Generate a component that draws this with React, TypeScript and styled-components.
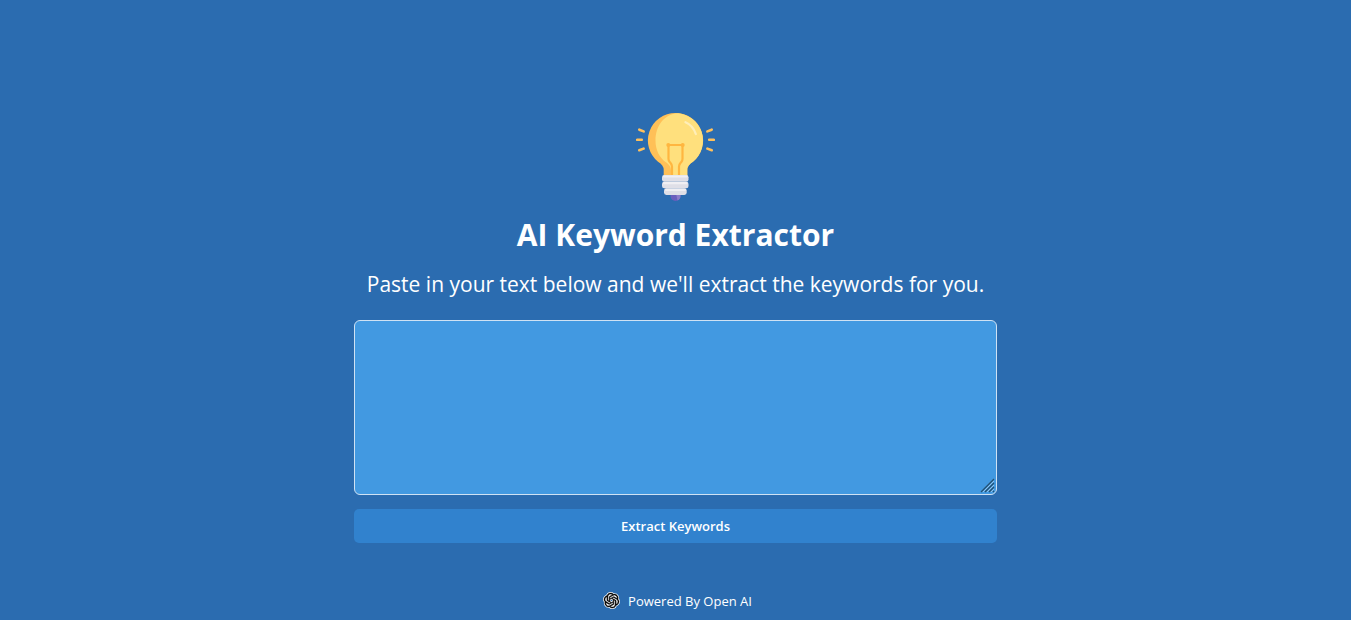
import React from "react";
import styled, { createGlobalStyle } from "styled-components";
import { SiOpenai } from "react-icons/si";

const GlobalStyle = createGlobalStyle`
  *, *::before, *::after { box-sizing: border-box; }
  body {
    margin: 0;
    background: #fff;
    color: #fff;
    font-family: "Segoe UI", "Open Sans", "Noto Sans", sans-serif;
  }
`;

const Frame = styled.div`
  display: flex;
  min-height: 100vh;
  padding: 0 14px 7px 0;
`;

const Page = styled.div`
  display: flex;
  flex: 1;
  flex-direction: column;
  align-items: center;
  padding: 113px 16px 8px;
  background: #2b6cb0;
`;

const Content = styled.main`
  display: flex;
  flex-direction: column;
  align-items: center;
  width: 100%;
  max-width: 643px;
`;

const Bulb = styled.svg`
  display: block;
  width: 79px;
  height: 88px;
`;

const Title = styled.h1`
  margin: 12px 0 0;
  font-size: 30px;
  font-weight: 700;
  line-height: 44px;
  text-align: center;
`;

const Intro = styled.p`
  margin: 11px 0 0;
  font-size: 21px;
  line-height: 32px;
  text-align: center;
`;

const Form = styled.form`
  display: flex;
  flex-direction: column;
  gap: 14px;
  width: 100%;
  margin-top: 20px;
`;

const Field = styled.div`
  position: relative;
  display: flex;
`;

const TextArea = styled.textarea`
  width: 100%;
  height: 175px;
  padding: 8px 16px;
  border: 1px solid #cfe2f4;
  border-radius: 6px;
  background: #4299e1;
  color: #fff;
  font: inherit;
  font-size: 14px;
  resize: none;
`;

const Grip = styled.svg`
  position: absolute;
  right: 2px;
  bottom: 2px;
  width: 15px;
  height: 15px;
  pointer-events: none;
`;

const SubmitButton = styled.button`
  height: 34px;
  border: 0;
  border-radius: 5px;
  background: #3182ce;
  color: #fff;
  font-family: inherit;
  font-size: 13px;
  font-weight: 600;
  cursor: pointer;
`;

const Footer = styled.footer`
  display: flex;
  align-items: center;
  gap: 8px;
  margin-top: 48px;
  padding-left: 4px;
  font-size: 13px;
  line-height: 20px;
`;

const Logo = styled.svg`
  width: 17px;
  height: 17px;
  margin-bottom: 2px;
`;

function BulbIcon() {
  return (
    <Bulb viewBox="11 8 79 88" aria-hidden="true">
      <circle cx="50.5" cy="91" r="5" fill="#6a5ebd" />
      <path d="M50.5 86h5v5a5 5 0 0 1-3 4.500z" fill="#8c7bc9" />
      <path
        d="M50.500 8A27.500 27.500 0 0 0 33 56.800q5.700 3.500 5.700 8V71h23.600v-6.200q0-4.500 5.700-8A27.500 27.500 0 0 0 50.500 8Z"
        fill="#ffc057"
      />
      <path
        d="M53 8.200C39 9 30.500 21 30.500 35.500c0 9.500 4 17 10 21.500 4.500 3 5.500 5.500 5.500 9v5h16.300v-6.200q0-4.500 5.700-8A27.500 27.500 0 0 0 53 8.200Z"
        fill="#ffe07d"
      />
      <path
        d="M47 71V61.500q0-2-1.800-4l-.7-.8q-1-1.200-1-3V39.500m10.500 31.500V61.500q0-2 1.800-4l.7-.8q1-1.200 1-3V39.500M43 40h15"
        fill="none"
        stroke="#ffb640"
        strokeWidth="2.200"
      />
      <circle cx="43.300" cy="40" r="2" fill="#ffb640" />
      <circle cx="57.700" cy="40" r="2" fill="#ffb640" />
      <path
        d="M60.500 17.300Q68 20.500 70.800 29"
        fill="none"
        stroke="#ffeeb8"
        strokeWidth="2.300"
        strokeLinecap="round"
      />
      <rect x="37" y="70" width="26.500" height="6.700" rx="2.300" fill="#dfdfe7" />
      <rect x="37" y="76.700" width="26.500" height="6.600" rx="2.300" fill="#dfdfe7" />
      <rect x="39" y="83.300" width="22.700" height="6.600" rx="2.300" fill="#dfdfe7" />
      <path
        d="M39 71.500h22.500M39 78.200h22.500M41 84.800h19"
        stroke="#f0eff3"
        strokeWidth="2.200"
        strokeLinecap="round"
      />
      <path
        d="m14.300 24.700 4.300 1.700M12.200 34.800h4.600M14.300 45.200l4.300-1.600M86.700 24.700l-4.300 1.700M88.800 34.800h-4.600M86.700 45.200l-4.300-1.600"
        stroke="#ffc05c"
        strokeWidth="2.600"
        strokeLinecap="round"
      />
    </Bulb>
  );
}

function OpenAiLogo() {
  return (
    <Logo viewBox="-1.500 -1.500 27 27" aria-hidden="true">
      <SiOpenai size={24} color="#fff" stroke="#fff" strokeWidth={3} overflow="visible" />
      <SiOpenai size={24} color="#000" stroke="#000" strokeWidth={0.7} overflow="visible" />
    </Logo>
  );
}

export default function App() {
  return (
    <>
      <GlobalStyle />
      <Frame>
        <Page>
          <Content>
            <BulbIcon />
            <Title>AI Keyword Extractor</Title>
            <Intro>Paste in your text below and we'll extract the keywords for you.</Intro>
            <Form onSubmit={(event) => event.preventDefault()}>
              <Field>
                <TextArea aria-label="Text to extract keywords from" />
                <Grip viewBox="0 0 15 15" aria-hidden="true">
                  <path
                    d="M1 14 14 1M5 14l9-9M9 14l5-5M13 14l1-1"
                    stroke="#24506f"
                    strokeWidth="1.200"
                  />
                  <path
                    d="M3 14 14 3M7 14l7-7M11 14l3-3"
                    stroke="#8fc3ee"
                    strokeWidth="1"
                  />
                </Grip>
              </Field>
              <SubmitButton type="submit">Extract Keywords</SubmitButton>
            </Form>
          </Content>
          <Footer>
            <OpenAiLogo />
            <span>Powered By Open AI</span>
          </Footer>
        </Page>
      </Frame>
    </>
  );
}
